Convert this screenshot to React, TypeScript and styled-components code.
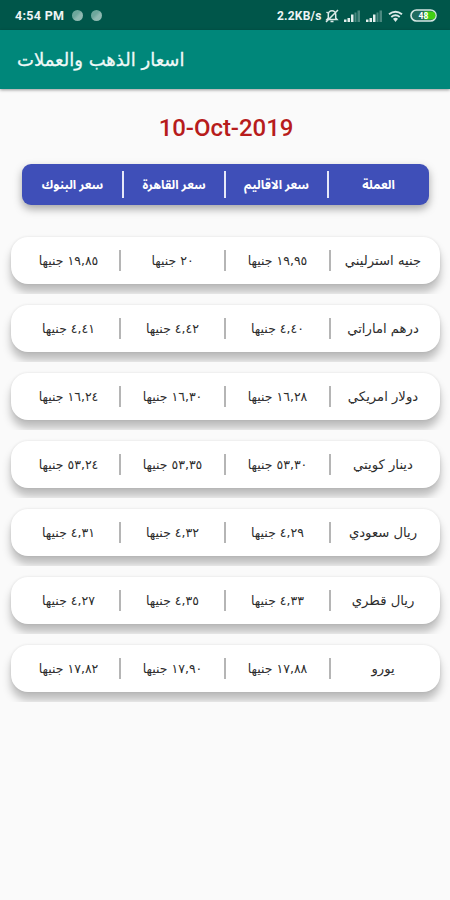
import React from 'react';
import styled, { createGlobalStyle } from 'styled-components';

const GlobalStyle = createGlobalStyle`
  * { box-sizing: border-box; }
  body { margin: 0; background: #fafafa; font-family: Roboto, "DejaVu Sans", sans-serif; }
`;

const Screen = styled.div`
  width: 450px;
  height: 900px;
  overflow: hidden;
  background: #fafafa;
`;

const StatusBar = styled.div`
  display: flex;
  align-items: center;
  justify-content: space-between;
  height: 30px;
  padding: 1px 13px 0 15px;
  background: #00564a;
  color: #eef5f4;
  font-size: 12.5px;
  font-weight: 700;
`;

const StatusGroup = styled.div`
  display: flex;
  align-items: center;
`;

const Clock = styled.span`
  width: 57px;
  letter-spacing: 0.3px;
  white-space: nowrap;
`;

const NoticeDot = styled.i`
  width: 11px;
  height: 11px;
  margin-right: 8px;
  border-radius: 50%;
  background: linear-gradient(135deg, #6ea79c 40%, #8fb9b1 60%);
`;

const Speed = styled.span`
  width: 47px;
  font-size: 12px;
  letter-spacing: 0.2px;
  white-space: nowrap;
`;

const StatusIcon = styled.svg<{ $gap?: number }>`
  display: block;
  margin-left: ${p => p.$gap ?? 0}px;
`;

const AppBar = styled.header`
  display: flex;
  align-items: center;
  height: 59px;
  padding: 0 17px;
  background: #00877a;
  box-shadow: 0 1px 3px rgba(0, 0, 0, 0.4);
`;

const Title = styled.h1`
  margin: 0;
  color: #f0f9f8;
  font-family: "DejaVu Sans", sans-serif;
  font-size: 18px;
  font-weight: 400;
  line-height: 30px;
  white-space: nowrap;
  -webkit-text-stroke: 0.3px #f0f9f8;
`;

const DateText = styled.h2`
  margin: 24px 0 22px;
  padding-left: 2px;
  color: #b71c1c;
  font-size: 24px;
  font-weight: 500;
  line-height: 30px;
  letter-spacing: -0.05px;
  text-align: center;
`;

const HeaderCard = styled.div`
  display: grid;
  grid-template-columns: 101px 102px 103px 101px;
  width: 407px;
  height: 41px;
  margin: -1px 0 21px 22px;
  border-radius: 9px;
  background: #3f4fb8;
  box-shadow: 0 4px 8px rgba(0, 0, 0, 0.34);
`;

const Cell = styled.div<{ $divided?: boolean }>`
  display: flex;
  align-items: center;
  justify-content: center;
  position: relative;
  color: #2c2c2c;
  font-family: "DejaVu Sans", sans-serif;
  font-size: 12.5px;
  white-space: nowrap;
  &::before {
    content: '';
    display: ${p => (p.$divided ? 'block' : 'none')};
    position: absolute;
    left: -1px;
    top: 13px;
    width: 2px;
    height: 21px;
    background: #b5b5b5;
  }
  &:first-child {
    padding-left: 6px;
  }
  &:last-child {
    font-size: 13.2px;
  }
`;

const HeadCell = styled(Cell)`
  color: #fff;
  font-family: Roboto, "Noto Sans Arabic", sans-serif;
  font-size: 12.3px;
  font-weight: 700;
  &::before {
    top: 7px;
    height: 27px;
    background: #e6e8f8;
  }
  &:first-child {
    padding-left: 0;
  }
  &:last-child {
    font-size: 12.3px;
  }
`;

const List = styled.main`
  display: grid;
  grid-auto-rows: 68px;
`;

const RowSlot = styled.div`
  padding: 11px 10px 0 11px;
  overflow: hidden;
`;

const RateCard = styled.div`
  display: grid;
  grid-template-columns: 109px 105px 105px 106px;
  height: 46.5px;
  border-radius: 17px;
  background: #fff;
  box-shadow: 0 8px 8px rgba(0, 0, 0, 0.25), 0 0 3px rgba(0, 0, 0, 0.1);
`;

const rates = [
  ['١٩,٨٥ جنيها', '٢٠ جنيها', '١٩,٩٥ جنيها', 'جنيه استرليني'],
  ['٤,٤١ جنيها', '٤,٤٢ جنيها', '٤,٤٠ جنيها', 'درهم اماراتي'],
  ['١٦,٢٤ جنيها', '١٦,٣٠ جنيها', '١٦,٢٨ جنيها', 'دولار امريكي'],
  ['٥٣,٢٤ جنيها', '٥٣,٣٥ جنيها', '٥٣,٣٠ جنيها', 'دينار كويتي'],
  ['٤,٣١ جنيها', '٤,٣٢ جنيها', '٤,٢٩ جنيها', 'ريال سعودي'],
  ['٤,٢٧ جنيها', '٤,٣٥ جنيها', '٤,٣٣ جنيها', 'ريال قطري'],
  ['١٧,٨٢ جنيها', '١٧,٩٠ جنيها', '١٧,٨٨ جنيها', 'يورو'],
];

const headings = ['سعر البنوك', 'سعر القاهرة', 'سعر الاقاليم', 'العملة'];

const Signal = ({ gap }: { gap: number }) => (
  <StatusIcon $gap={gap} width="17" height="12" viewBox="0 0 17 12">
    <path d="M0 12V9.5h2.5V12zM3.5 12V8H6v4zM7 12V4.5h2.5V12z" fill="#e4efed" />
    <path d="M10.5 12V2.5h2V12zM13.5 12V0.5H16V12z" fill="#4b8980" />
  </StatusIcon>
);

export default function App() {
  return (
    <Screen>
      <GlobalStyle />
      <StatusBar>
        <StatusGroup>
          <Clock>4:54 PM</Clock>
          <NoticeDot />
          <NoticeDot />
        </StatusGroup>
        <StatusGroup>
          <Speed>2.2KB/s</Speed>
          <StatusIcon $gap={1} width="14" height="14" viewBox="0 0 14 14" fill="none" stroke="#dceae8" strokeWidth="1.5">
            <path d="M2 10.5h10L10.7 9V5.5a3.7 3.7 0 0 0-7.4 0V9zM5.5 12.5h3M1 13 13 1M1.5 3l2 1.5" />
          </StatusIcon>
          <Signal gap={5} />
          <Signal gap={5} />
          <StatusIcon $gap={5} width="15" height="12" viewBox="0 0 15 12" fill="none" stroke="#dceae8" strokeWidth="1.9">
            <path d="M1 4.2q6.5-5 13 0M3.3 7q4.2-3.3 8.4 0" />
            <path d="M5 8.7q2.5-1.8 5 0L7.5 12z" fill="#dceae8" stroke="none" />
          </StatusIcon>
          <StatusIcon $gap={7} width="27" height="13" viewBox="0 0 27 13">
            <rect x="1" y="1" width="25" height="11" rx="5.5" fill="#1f6b5f" stroke="#d5e6e3" strokeWidth="1.6" />
            <path d="M14 2.5h7.5a4 4 0 0 1 0 8H14z" fill="#42cf13" />
            <text x="13.5" y="9.7" fill="#fff" fontSize="8.5" fontWeight="700" textAnchor="middle">48</text>
          </StatusIcon>
        </StatusGroup>
      </StatusBar>
      <AppBar>
        <Title dir="rtl">اسعار الذهب والعملات</Title>
      </AppBar>
      <DateText>10-Oct-2019</DateText>
      <HeaderCard>
        {headings.map((label, i) => (
          <HeadCell key={label} dir="rtl" $divided={i > 0}>{label}</HeadCell>
        ))}
      </HeaderCard>
      <List>
        {rates.map(row => (
          <RowSlot key={row[3]}>
            <RateCard>
              {row.map((value, i) => (
                <Cell key={i} dir="rtl" $divided={i > 0}>{value}</Cell>
              ))}
            </RateCard>
          </RowSlot>
        ))}
      </List>
    </Screen>
  );
}
